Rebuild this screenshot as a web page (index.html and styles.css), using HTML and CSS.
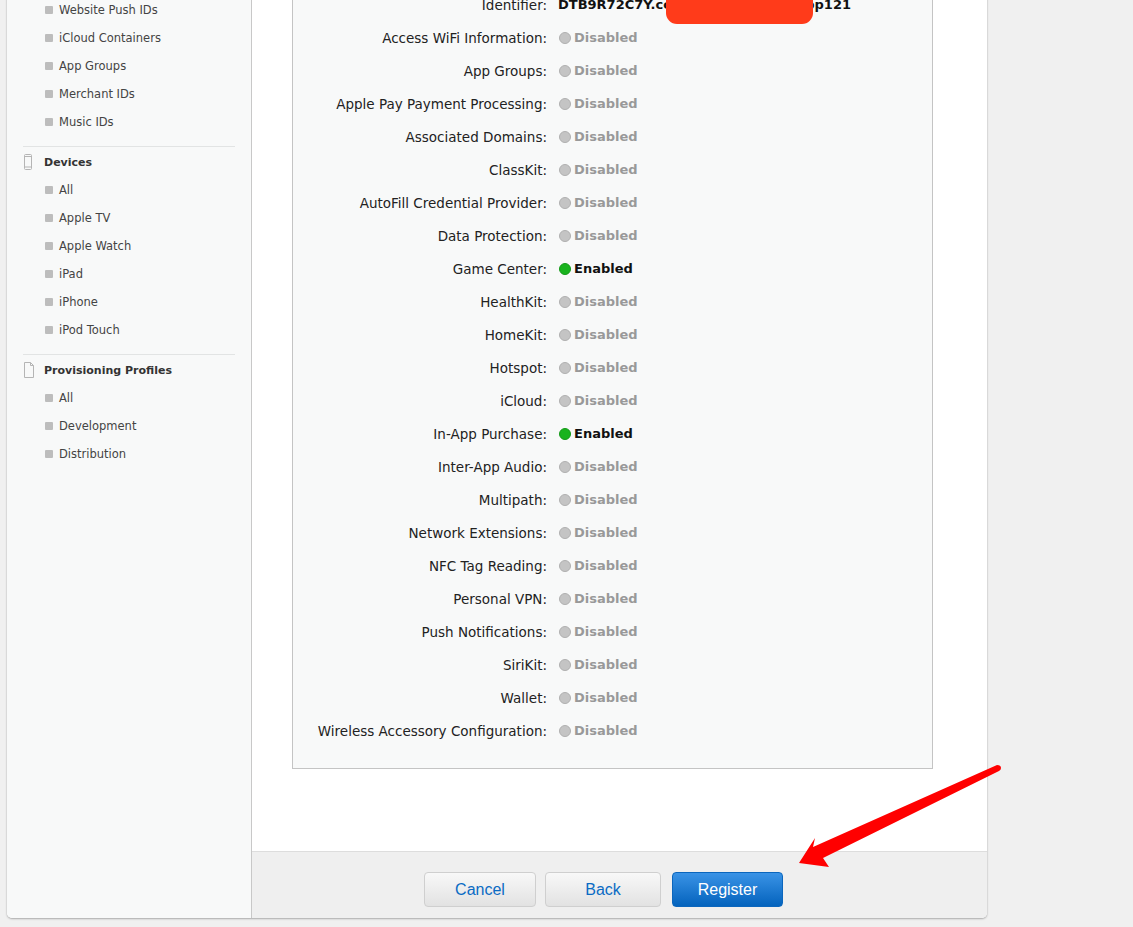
FILE: index.html

```html
<!DOCTYPE html>
<html lang="en">
<head>
  <meta charset="UTF-8" />
  <meta name="viewport" content="width=device-width, initial-scale=1.0"/>
  <title>Register App ID</title>
  <link rel="stylesheet" href="styles.css">
</head>
<body>
  <div class="panel">
    <aside class="sidebar">
      <div class="group">
        <ul>
          <li>Website Push IDs</li>
          <li>iCloud Containers</li>
          <li>App Groups</li>
          <li>Merchant IDs</li>
          <li>Music IDs</li>
        </ul>
      </div>
      <div class="group">
        <h4>
          <svg class="side-icon" width="10" height="16" viewBox="0 0 10 16" fill="none" stroke="#b5b5b5"><rect x="1.5" y="0.5" width="7" height="15" rx="1"/><path d="M1.5 2.5h7M1.5 13h7"/></svg>
          Devices
        </h4>
        <ul>
          <li>All</li>
          <li>Apple TV</li>
          <li>Apple Watch</li>
          <li>iPad</li>
          <li>iPhone</li>
          <li>iPod Touch</li>
        </ul>
      </div>
      <div class="group">
        <h4>
          <svg class="side-icon" width="12" height="16" viewBox="0 0 12 16" fill="none" stroke="#b5b5b5"><path d="M1.5 0.5h6l3 3v12h-9zM7.5 0.5v3h3"/></svg>
          Provisioning Profiles
        </h4>
        <ul>
          <li>All</li>
          <li>Development</li>
          <li>Distribution</li>
        </ul>
      </div>
    </aside>

    <main class="main">
      <div class="content">
        <div class="summary">
          <div class="row"><span class="label">Identifier:</span><span class="identifier"><span>DTB9R72C7Y.co</span><span>pp121</span></span></div>
          <div class="row"><span class="label">Access WiFi Information:</span><span class="status">Disabled</span></div>
          <div class="row"><span class="label">App Groups:</span><span class="status">Disabled</span></div>
          <div class="row"><span class="label">Apple Pay Payment Processing:</span><span class="status">Disabled</span></div>
          <div class="row"><span class="label">Associated Domains:</span><span class="status">Disabled</span></div>
          <div class="row"><span class="label">ClassKit:</span><span class="status">Disabled</span></div>
          <div class="row"><span class="label">AutoFill Credential Provider:</span><span class="status">Disabled</span></div>
          <div class="row"><span class="label">Data Protection:</span><span class="status">Disabled</span></div>
          <div class="row"><span class="label">Game Center:</span><span class="status on">Enabled</span></div>
          <div class="row"><span class="label">HealthKit:</span><span class="status">Disabled</span></div>
          <div class="row"><span class="label">HomeKit:</span><span class="status">Disabled</span></div>
          <div class="row"><span class="label">Hotspot:</span><span class="status">Disabled</span></div>
          <div class="row"><span class="label">iCloud:</span><span class="status">Disabled</span></div>
          <div class="row"><span class="label">In-App Purchase:</span><span class="status on">Enabled</span></div>
          <div class="row"><span class="label">Inter-App Audio:</span><span class="status">Disabled</span></div>
          <div class="row"><span class="label">Multipath:</span><span class="status">Disabled</span></div>
          <div class="row"><span class="label">Network Extensions:</span><span class="status">Disabled</span></div>
          <div class="row"><span class="label">NFC Tag Reading:</span><span class="status">Disabled</span></div>
          <div class="row"><span class="label">Personal VPN:</span><span class="status">Disabled</span></div>
          <div class="row"><span class="label">Push Notifications:</span><span class="status">Disabled</span></div>
          <div class="row"><span class="label">SiriKit:</span><span class="status">Disabled</span></div>
          <div class="row"><span class="label">Wallet:</span><span class="status">Disabled</span></div>
          <div class="row"><span class="label">Wireless Accessory Configuration:</span><span class="status">Disabled</span></div>
        </div>
      </div>
      <div class="footer">
        <button class="btn cancel">Cancel</button>
        <button class="btn back">Back</button>
        <button class="btn primary">Register</button>
      </div>
    </main>
  </div>

  <!-- annotations painted over the screenshot -->
  <div class="redact"></div>
  <svg class="arrow" width="1133" height="927" viewBox="0 0 1133 927">
    <path d="M799 863L815 838L813 847L997 765Q1001 765 1001 768Q1001 770 999 771L823 858L829 867Z" fill="#ff0000"/>
  </svg>
</body>
</html>
```

FILE: styles.css

```css
* { box-sizing: border-box; }
html, body { height: 927px; overflow: hidden; }
body { margin: 0; background: #f0f0f0; font-family: "DejaVu Sans", sans-serif; color: #222; }

.panel { display: flex; width: 980px; height: 938px; margin: -20px 0 0 7px; background: #fff; border-radius: 5px; box-shadow: 0 1px 2px #aaa, 0 0 1px #bbb; overflow: hidden; }

.sidebar { width: 245px; flex: none; padding: 15px 16px 0; background: #f8f9f9; border-right: 1px solid #c8c8c8; }
.sidebar ul { list-style: none; margin: 0; padding: 0; }
.group { padding-bottom: 11px; border-bottom: 1px solid #e2e4e4; }
.group:last-child { border-bottom: 0; }
.group h4 { display: flex; align-items: center; height: 28px; margin: 0; padding: 2px 0 0 21px; position: relative; font-size: 11px; font-weight: bold; color: #333; }
.side-icon { position: absolute; left: 0; top: 7px; }
.sidebar li { display: flex; align-items: center; height: 28px; padding: 2px 0 0 22px; font-size: 11.5px; color: #444; }
.sidebar li::before { content: ""; width: 8px; height: 8px; margin-right: 6px; border-radius: 1px; background: #bdbdbd; }

.main { flex: 1; display: flex; flex-direction: column; }
.content { flex: 1; padding: 0 54px 0 40px; }
.summary { padding: 7px 0 21px; background: #f8f9f9; border: 1px solid #c4c4c4; }
.row { display: flex; align-items: center; height: 33px; font-size: 13.5px; }
.label { width: 254px; flex: none; text-align: right; color: #222; }
.identifier { display: flex; justify-content: space-between; width: 293px; margin-left: 11px; font-size: 13px; font-weight: bold; color: #111; }
.status { display: flex; align-items: center; margin-left: 12px; font-size: 13px; font-weight: bold; color: #999; }
.status::before { content: ""; width: 10px; height: 10px; margin-right: 3px; border-radius: 50%; background: #c4c4c4; border: 1px solid #b0b0b0; }
.status.on { color: #111; }
.status.on::before { background: #19b31e; border-color: #149a18; }

.footer { display: flex; align-items: flex-start; height: 67px; padding: 20px 0 0 172px; background: #efefef; border-top: 1px solid #ddd; }
.btn { height: 35px; padding: 0; font-family: "Liberation Sans", sans-serif; font-size: 16px; color: #0a6bc4; background: linear-gradient(#f8f8f8, #e2e2e2); border: 1px solid #cfcfcf; border-radius: 4px; }
.cancel { width: 112px; margin-right: 9px; }
.back { width: 116px; margin-right: 11px; }
.primary { width: 111px; color: #fff; background: linear-gradient(#3a93e6, #0463bd); border-color: #0b66bd; }

.redact { position: absolute; left: 666px; top: -10px; width: 147px; height: 34px; background: #ff3b1a; border-radius: 11px; }
.arrow { position: absolute; left: 0; top: 0; pointer-events: none; }
```
